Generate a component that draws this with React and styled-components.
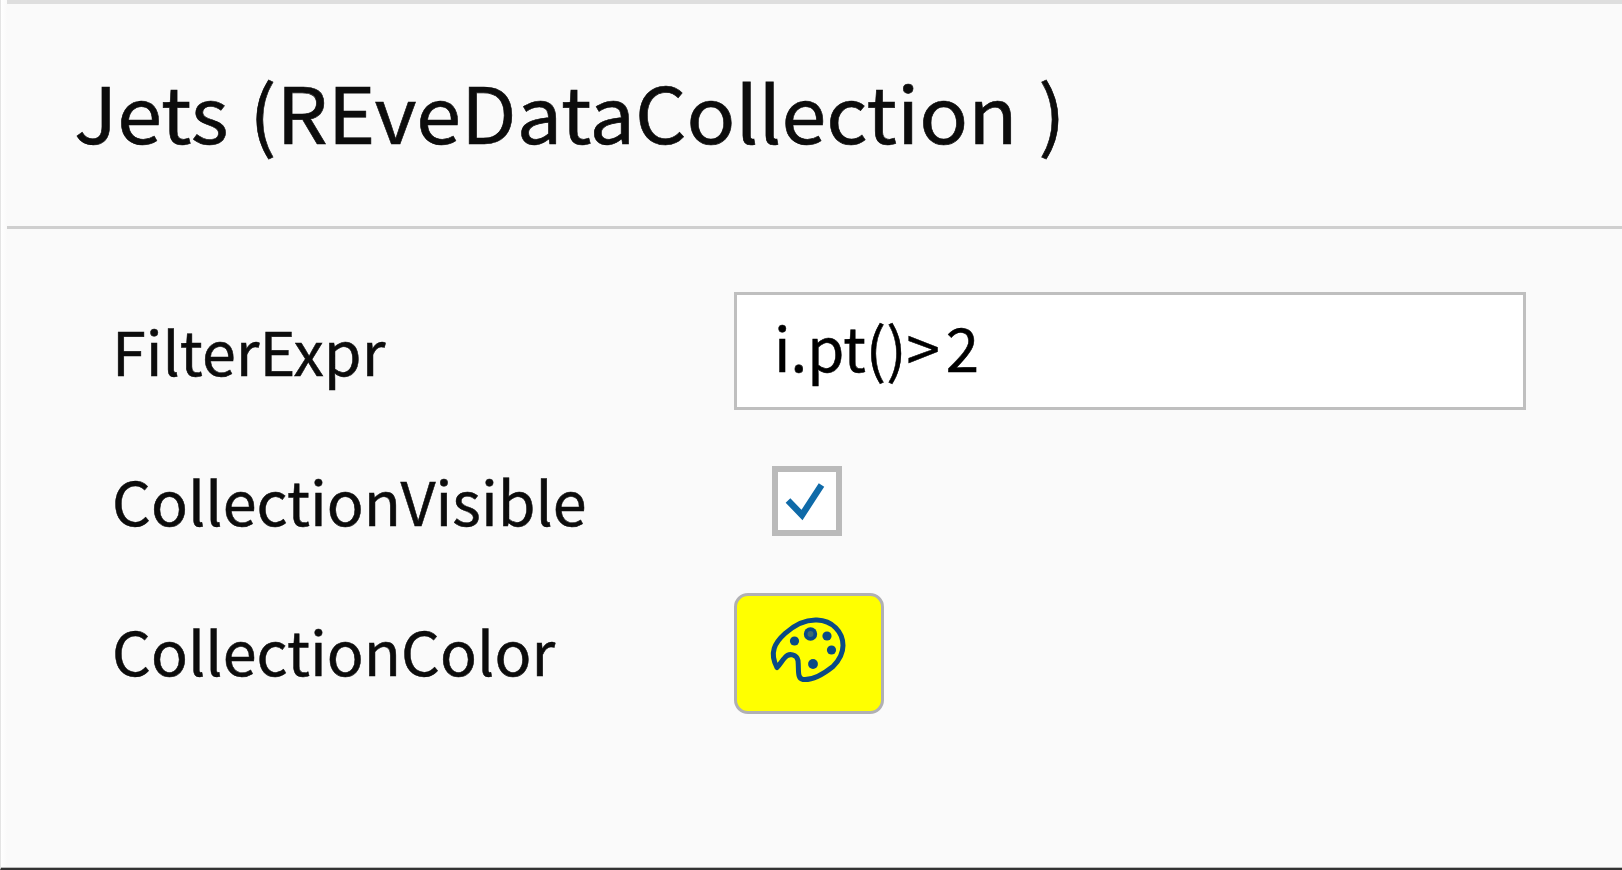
import React from "react";
import styled, { createGlobalStyle } from "styled-components";

const GlobalStyle = createGlobalStyle`
  * { box-sizing: border-box; }
  body { margin: 0; background: #fafafa; overflow: hidden; }
`;

const Panel = styled.main`
  display: flex;
  flex-direction: column;
  width: 1622px;
  height: 870px;
  border-left: 1px solid #e4e4e4;
  border-bottom: 2px solid #333;
  box-shadow: inset 0 -1px 0 #bbb;
  background: linear-gradient(90deg, #fff 0, #fafafa 6px);
  color: #0c0c0c;
  font-family: "Noto Sans CJK SC", "Noto Sans", sans-serif;
  white-space: pre;
`;

const Header = styled.header`
  display: flex;
  align-items: center;
  height: 229px;
  margin-left: 6px;
  padding: 0 0 11px 67px;
  border-top: 4px solid #dedede;
  border-bottom: 3px solid #cfcfcf;
`;

const Title = styled.h1`
  margin: 0;
  font-size: 78px;
  font-weight: 400;
  line-height: 100px;
  word-spacing: 2.5px;
  transform: scaleX(1.036);
  transform-origin: left;
  -webkit-text-stroke: 0.6px currentColor;
`;

const Form = styled.section`
  display: flex;
  flex-direction: column;
  padding: 47px 0 0 111px;
`;

const Row = styled.div`
  display: grid;
  grid-template-columns: 622px 792px;
  align-items: center;
  height: 150px;
`;

const Label = styled.span`
  padding-bottom: 3px;
  font-size: 60px;
  line-height: 80px;
  transform: scaleX(1.018);
  transform-origin: left;
  -webkit-text-stroke: 0.5px currentColor;
`;

const Field = styled.div`
  display: flex;
  align-items: center;
  height: 118px;
  padding: 0 0 10px 37px;
  border: 3px solid #bfbfbf;
  background: #fff;
  color: #000;
  font-size: 60px;
  line-height: 80px;
  -webkit-text-stroke: 0.5px currentColor;
`;

const Operator = styled.span`
  letter-spacing: 6px;
`;

const CheckBox = styled.div`
  display: grid;
  place-items: center;
  width: 70px;
  height: 70px;
  margin-left: 38px;
  border: 6px solid #bababa;
  background: #fff;
`;

const ColorButton = styled.button`
  display: grid;
  place-items: center;
  width: 150px;
  height: 121px;
  margin-top: 4px;
  padding: 0;
  border: 3px solid #b0b0b4;
  border-radius: 14px;
  background: #ff0;
`;

const CheckIcon = () => (
  <svg width="58" height="58" viewBox="0 0 58 58" fill="none" stroke="#0f6aa8" strokeWidth="6.500">
    <path d="M10 28.500L24 43L43.500 13" />
  </svg>
);

const PaletteIcon = () => (
  <svg width="144" height="115" viewBox="737 595.500 144 115" fill="none" stroke="#0a4a85" strokeWidth="5" strokeLinejoin="round">
    <path d="M777 667C769 652 775 642 785 633C796 623 806 619 817 619.500C832 620 843 631 843 645C843 653 839 660 833 666C823 674 813 680 803 679C797 678 799 670 798 660C797 654 789 652 785 657C782 660 780 664 777 667Z" />
    <g fill="#0a4a85" stroke="none">
      <circle cx="810.500" cy="633.500" r="6.700" />
      <circle cx="794.500" cy="640.500" r="4.600" />
      <circle cx="827" cy="635.500" r="4.600" />
      <circle cx="831.500" cy="649.500" r="4.600" />
      <circle cx="813" cy="663.500" r="4.900" />
    </g>
    <circle cx="810.500" cy="633.500" r="3" fill="#3b6c70" stroke="none" />
  </svg>
);

export default function App() {
  return (
    <>
      <GlobalStyle />
      <Panel>
        <Header>
          <Title>Jets (REveDataCollection )</Title>
        </Header>
        <Form>
          <Row>
            <Label>FilterExpr</Label>
            <Field><span>i.pt()<Operator>&gt;</Operator>2</span></Field>
          </Row>
          <Row>
            <Label>CollectionVisible</Label>
            <CheckBox role="checkbox" aria-checked="true"><CheckIcon /></CheckBox>
          </Row>
          <Row>
            <Label>CollectionColor</Label>
            <ColorButton aria-label="CollectionColor"><PaletteIcon /></ColorButton>
          </Row>
        </Form>
      </Panel>
    </>
  );
}
